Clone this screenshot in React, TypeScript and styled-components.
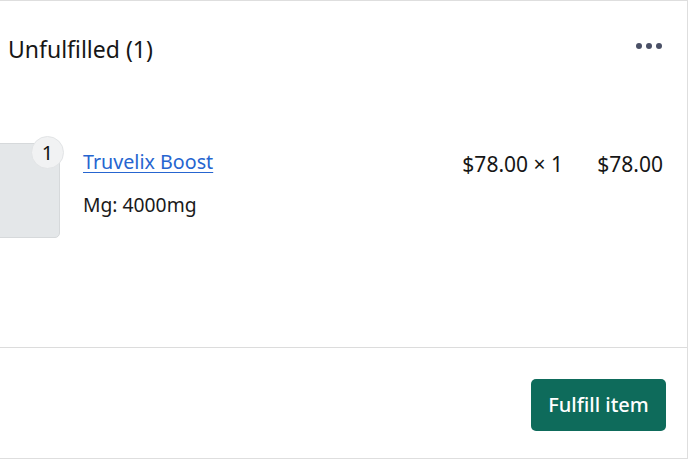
import styled, { createGlobalStyle } from "styled-components";

const GlobalStyle = createGlobalStyle`
  body {
    margin: 0;
    background: #ffffff;
    font-family: "Noto Sans", "Open Sans", Arial, sans-serif;
    color: #1a1a1a;
    overflow: hidden;
  }
`;

const Card = styled.section`
  margin-left: -30px;
  width: 718px;
  height: 459px;
  box-sizing: border-box;
  border: 1px solid #dedede;
  border-left: none;
  background: #ffffff;
  display: flex;
  flex-direction: column;
`;

const Header = styled.header`
  height: 96px;
  display: flex;
  align-items: center;
  justify-content: space-between;
  padding: 0 25px 0 38px;
`;

const Title = styled.h2`
  margin: 0;
  font-size: 23px;
  font-weight: 400;
  color: #161616;
`;

const MoreButton = styled.button`
  border: none;
  background: none;
  padding: 0;
  margin-bottom: 7px;
  display: flex;
  gap: 4px;
  cursor: pointer;
`;

const Dot = styled.span`
  width: 6px;
  height: 6px;
  border-radius: 50%;
  background: #4a5066;
`;

const Body = styled.div`
  flex: 1;
  padding: 46px 24px 0 11px;
`;

const ItemRow = styled.div`
  display: flex;
  align-items: flex-start;
`;

const Thumb = styled.div`
  position: relative;
  width: 79px;
  height: 95px;
  box-sizing: border-box;
  background: #e4e7e9;
  border: 1px solid #d6d9db;
  border-radius: 5px;
  flex-shrink: 0;
`;

const Badge = styled.span`
  position: absolute;
  top: -8px;
  right: -5px;
  width: 33px;
  height: 33px;
  border-radius: 50%;
  background: #f1f2f3;
  border: 1px solid #e2e4e6;
  box-sizing: border-box;
  display: flex;
  align-items: center;
  justify-content: center;
  font-size: 20px;
  color: #111;
`;

const Info = styled.div`
  flex: 1;
  margin-left: 23px;
  display: flex;
  flex-direction: column;
  gap: 17px;
`;

const ProductLink = styled.a`
  font-size: 19.7px;
  color: #2665d0;
  text-decoration: underline;
  text-underline-offset: 3px;
  line-height: 26px;
  margin-top: 6px;
`;

const Variant = styled.span`
  font-size: 19.3px;
  color: #1a1a1a;
  line-height: 26px;
`;

const Amount = styled.span<{ $width: number }>`
  font-size: 21px;
  color: #161616;
  line-height: 26px;
  margin-top: 8px;
  width: ${(p) => p.$width}px;
  text-align: right;
`;

const Footer = styled.footer`
  height: 110px;
  border-top: 1px solid #dcdcdc;
  display: flex;
  align-items: center;
  justify-content: flex-end;
  padding-right: 21px;
`;

const FulfillButton = styled.button`
  height: 52px;
  width: 135px;
  border: none;
  border-radius: 5px;
  background: #0e6b5b;
  color: #ffffff;
  font-family: inherit;
  font-size: 20px;
  font-weight: 500;
  cursor: pointer;
  margin-top: 3px;
`;

export default function App() {
  return (
    <>
      <GlobalStyle />
      <Card>
        <Header>
          <Title>Unfulfilled (1)</Title>
          <MoreButton aria-label="More actions">
            <Dot />
            <Dot />
            <Dot />
          </MoreButton>
        </Header>
        <Body>
          <ItemRow>
            <Thumb>
              <Badge>1</Badge>
            </Thumb>
            <Info>
              <ProductLink href="#">Truvelix Boost</ProductLink>
              <Variant>Mg: 4000mg</Variant>
            </Info>
            <Amount $width={130}>$78.00 × 1</Amount>
            <Amount $width={100}>$78.00</Amount>
          </ItemRow>
        </Body>
        <Footer>
          <FulfillButton>Fulfill item</FulfillButton>
        </Footer>
      </Card>
    </>
  );
}
